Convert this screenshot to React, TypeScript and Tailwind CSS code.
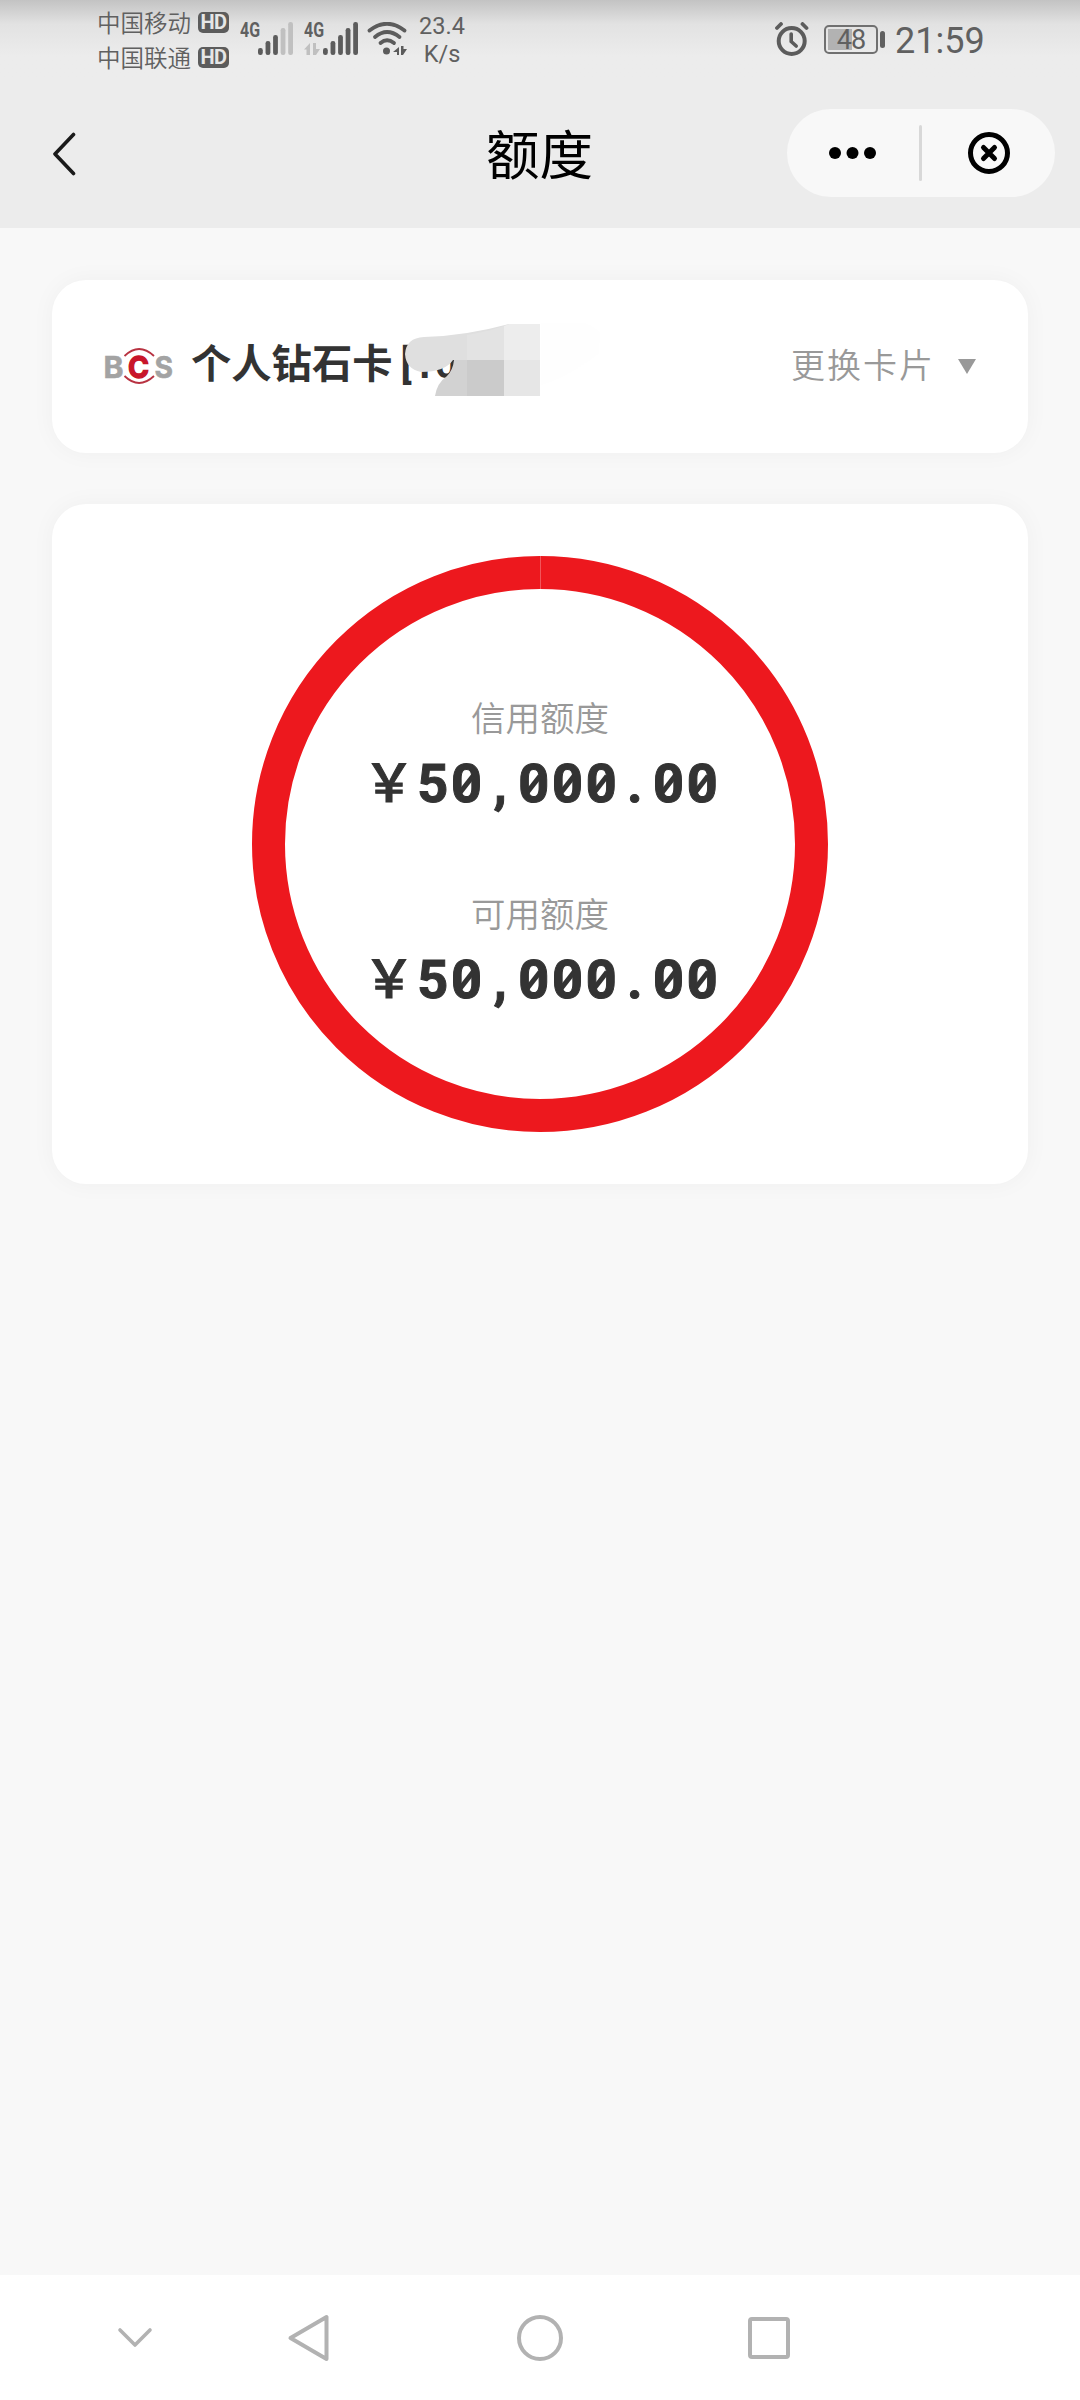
import React from 'react';

const HdBadge: React.FC = () => (
  <span className="w-[31px] h-[21px] rounded-[5px] bg-[#5c5c5c] text-[#e6e6e6] text-[20px] leading-[21px] font-bold text-center tracking-[-0.5px] font-['Roboto',sans-serif]">
    HD
  </span>
);

const SignalBars: React.FC<{ level: number }> = ({ level }) => {
  const tops = [26, 19, 13, 6, 0];
  return (
    <svg width="35" height="33" viewBox="0 0 35 33">
      {tops.map((top, i) => (
        <rect
          key={i}
          x={i * 7.55}
          y={top}
          width="4.8"
          height={33 - top}
          rx="2.2"
          fill={i < level ? '#5c5c5c' : '#c0c0c0'}
        />
      ))}
    </svg>
  );
};

const StatusBar: React.FC = () => (
  <div className="h-20 flex items-start bg-gradient-to-b from-[#c3c3c3] via-[#e2e2e2] via-30% to-[#ececec] to-70% text-[#606060]">
    <div className="ml-[97px] w-[132px] shrink-0 font-['Noto_Sans_CJK_SC',sans-serif] font-[350] text-[23.5px]">
      <div className="flex items-center justify-between h-[35px] mt-[5px]">
        <span className="leading-[35px]">中国移动</span>
        <HdBadge />
      </div>
      <div className="flex items-center justify-between h-[35px]">
        <span className="leading-[35px]">中国联通</span>
        <HdBadge />
      </div>
    </div>

    <div className="flex ml-[11px] mt-[22px] w-[53px] justify-between shrink-0">
      <span className="w-[18px] h-[16px]">
        <span className="block origin-left scale-x-[0.76] text-[21px] leading-[16px] font-bold font-['Roboto',sans-serif]">4G</span>
      </span>
      <SignalBars level={3} />
    </div>

    <div className="flex ml-[11px] mt-[22px] w-[54px] justify-between shrink-0">
      <div className="w-[19px]">
        <span className="block origin-left scale-x-[0.76] text-[21px] leading-[16px] font-bold font-['Roboto',sans-serif]">4G</span>
        <svg className="mt-[5px]" width="16" height="12" viewBox="0 0 16 12" fill="#c0c0c0">
          <path d="M6 0v12H2.500V6.500H0zM9 0h3v6h4l-4 6H9z" />
        </svg>
      </div>
      <SignalBars level={5} />
    </div>

    <svg className="ml-[9px] mt-[22px] shrink-0" width="40" height="33" viewBox="0 0 40 33" fill="none" stroke="#5c5c5c" strokeWidth="3.8" strokeLinecap="round">
      <path d="M2.500 8.500Q20 -5 37.500 8.500" />
      <path d="M8 15Q20 5 32.500 15" />
      <path d="M13.500 21Q20 15.500 27 21" />
      <circle cx="19.500" cy="29" r="3.500" fill="#5c5c5c" stroke="none" />
      <path d="M32 25v8h-2v-3H26zM34 24h2.500v3h3.500l-4 6h-2z" fill="#5c5c5c" stroke="none" />
    </svg>

    <div className="ml-[12px] mt-[12px] w-[46px] text-center text-[23.5px] leading-[28px] font-['Roboto',sans-serif] font-normal">
      <div>23.4</div>
      <div>K/s</div>
    </div>

    <div className="flex items-start ml-auto mr-[96px]">
      <svg className="mt-[22px]" width="34" height="35" viewBox="0 0 34 35" fill="none" stroke="#5c5c5c" strokeLinecap="round">
        <circle cx="16.700" cy="19" r="13" strokeWidth="4" />
        <path d="M16.200 12v7.500l5 4.500" strokeWidth="3.600" />
        <path d="M2 6l4-4M27.500 2l4 4" strokeWidth="3.800" />
      </svg>
      <div className="ml-[15px] mt-[25px] w-[54px] h-[29px] rounded-[5px] border-2 border-[#707070] p-[2px]">
        <div className="relative h-full">
          <div className="h-full w-[24px] bg-[#b2b2b2]" />
          <span className="absolute inset-0 text-center text-[27px] leading-[22px] tracking-[-1px] font-['Roboto',sans-serif]">48</span>
        </div>
      </div>
      <div className="ml-[2px] mt-[31px] w-[5px] h-[17px] rounded-sm bg-[#606060]" />
      <span className="ml-[10px] mt-[20px] w-[89px] text-[36px] leading-[42px] font-normal font-['Roboto',sans-serif]">21:59</span>
    </div>
  </div>
);

const TitleBar: React.FC = () => (
  <div className="h-[148px] flex items-center justify-between pl-[52px] pr-[25px] pb-[2px] bg-[#ececec]">
    <div className="w-[240px] mt-[2px]">
      <svg width="24" height="44" viewBox="0 0 24 44" fill="none" stroke="#1a1a1a" strokeWidth="3.600" strokeLinecap="round" strokeLinejoin="round">
        <path d="M21.500 2.500L3 22l18.500 19.500" />
      </svg>
    </div>
    <h1 className="-mt-[3px] text-[53.5px] leading-[60px] font-normal text-black font-['Noto_Sans_CJK_SC',sans-serif]">额度</h1>
    <div className="w-[268px] h-[88px] rounded-full bg-[#f8f8f8] flex items-center">
      <svg width="268" height="88" viewBox="0 0 268 88">
        <circle cx="48" cy="44" r="6" />
        <circle cx="65.500" cy="44" r="6" />
        <circle cx="83" cy="44" r="6" />
        <rect x="132" y="16" width="3" height="56" rx="1.500" fill="#d8d8d8" />
        <g fill="none" stroke="#000" strokeWidth="5" strokeLinecap="round">
          <circle cx="202" cy="44" r="18.500" />
          <path d="M196.500 38.500l11 11M207.500 38.500l-11 11" />
        </g>
      </svg>
    </div>
  </div>
);

const BankLogo: React.FC = () => (
  <svg className="overflow-visible" width="68" height="40" viewBox="0 0 68 40" fontFamily="Inter, sans-serif" fontWeight="700">
    <text x="-1.500" y="30.500" fontSize="30" textLength="20" lengthAdjust="spacingAndGlyphs" fill="#a3a3a3" stroke="#a3a3a3" strokeWidth="0.6">B</text>
    <text x="23" y="30.500" fontSize="30" textLength="21" lengthAdjust="spacingAndGlyphs" fill="#c8152a" stroke="#c8152a" strokeWidth="1.4">C</text>
    <text x="49.500" y="30.500" fontSize="30" textLength="18.500" lengthAdjust="spacingAndGlyphs" fill="#a3a3a3" stroke="#a3a3a3" strokeWidth="0.6">S</text>
    <path d="M19.500 9Q34 -5 49 9M19.500 29Q34 43 49 29" fill="none" stroke="#b83241" strokeWidth="1.800" />
  </svg>
);

// Mosaic strokes that hide the card number
const NumberMask: React.FC = () => (
  <svg className="absolute left-[214px] -top-[11px]" width="200" height="100" viewBox="0 0 200 100">
    <path d="M136 -2Q175 -10 195 10L194 30Q160 56 136 62z" fill="#fefefe" />
    <path d="M0 31Q1 15 19 14Q60 13 104 1V37H48Q40 49 16 49Q1 46 0 31z" fill="#dfdfdf" />
    <path d="M62 12Q85 8 99 3V37H62z" fill="#e3e3e3" />
    <path d="M30 73Q32 60 42 53Q48 47 49 37H62V73z" fill="#d2d2d2" />
    <path d="M62 37H99V73H62z" fill="#cbcbcb" />
    <path d="M99 3L104 1H135V37H99z" fill="#ededed" />
    <path d="M99 37H135V73H99z" fill="#e6e6e6" />
  </svg>
);

const CardSelector: React.FC = () => (
  <div className="h-[173px] rounded-[34px] bg-white shadow-[0_0_24px_rgba(0,0,0,0.04)] flex items-center justify-between pl-[53px] pr-[52px] font-['Noto_Sans_CJK_SC',sans-serif]">
    <div className="flex items-center">
      <BankLogo />
      <div className="relative ml-[18px] -mt-[8px] h-[58px] text-[40.3px] leading-[54px] font-bold text-[#333] whitespace-nowrap">
        个人钻石卡<span className="ml-[8px] font-['Roboto',sans-serif]">[10</span>
        <NumberMask />
      </div>
    </div>
    <button className="flex items-center text-[#999] text-[34px] tracking-[2px] font-[350]">
      <span className="-mt-[7px]">更换卡片</span>
      <svg className="ml-[23px] -mt-px" width="18" height="15" viewBox="0 0 18 15">
        <path d="M0 0h18L9 15z" fill="#999" />
      </svg>
    </button>
  </div>
);

const Amount: React.FC<{ label: string; value: string }> = ({ label, value }) => (
  <div className="flex flex-col items-center">
    <span className="text-[34.5px] leading-[44px] font-[350] text-[#999] font-['Noto_Sans_CJK_SC',sans-serif]">{label}</span>
    <div className="flex ml-[5px] mt-[10px] h-[72px] text-[54px] leading-[72px] font-bold text-[#333] font-['Roboto',sans-serif] [-webkit-text-stroke:1px_#333]">
      <span className="-ml-[3px] -mt-[4px] w-[53px] text-[52px] font-medium font-['Noto_Sans_CJK_SC',sans-serif]">￥</span>
      {value.split('').map((ch, i) => (
        <span key={i} className="relative w-[33.7px] text-center">
          {ch}
          {ch === '0' && (
            <svg className="absolute left-0 top-0" width="34" height="72" viewBox="0 0 34 72">
              <path d="M10.500 44L23 28" stroke="#333" strokeWidth="5" />
            </svg>
          )}
        </span>
      ))}
    </div>
  </div>
);

const LimitPanel: React.FC = () => (
  <div className="mt-[51px] h-[680px] rounded-[34px] bg-white shadow-[0_0_24px_rgba(0,0,0,0.04)] flex justify-center pt-[52px]">
    <div className="relative w-[576px] h-[576px] rounded-full border-[33px] border-[#ed181e] flex flex-col items-center pt-[105px] gap-[70px]">
      <div className="absolute -top-[33px] left-[255px] w-px h-[33px] bg-[#f2555a]" />
      <Amount label="信用额度" value="50,000.00" />
      <Amount label="可用额度" value="50,000.00" />
    </div>
  </div>
);

const NavigationBar: React.FC = () => (
  <div className="h-[125px] bg-white">
    <svg width="1080" height="125" viewBox="0 0 1080 125" fill="none" stroke="#b2b2b2" strokeWidth="4" strokeLinecap="round" strokeLinejoin="round">
      <path d="M120 55l15 15 15-15" strokeWidth="3.600" />
      <path d="M290.500 63L326.500 42V84z" />
      <circle cx="540" cy="63" r="21" />
      <rect x="750" y="44" width="38" height="38" rx="2" />
    </svg>
  </div>
);

const App: React.FC = () => {
  return (
    <div className="w-[1080px] h-[2400px] flex flex-col bg-[#f8f8f8] overflow-hidden">
      <StatusBar />
      <TitleBar />
      <main className="flex-1 px-[52px] pt-[52px]">
        <CardSelector />
        <LimitPanel />
      </main>
      <NavigationBar />
    </div>
  );
};

export default App;
